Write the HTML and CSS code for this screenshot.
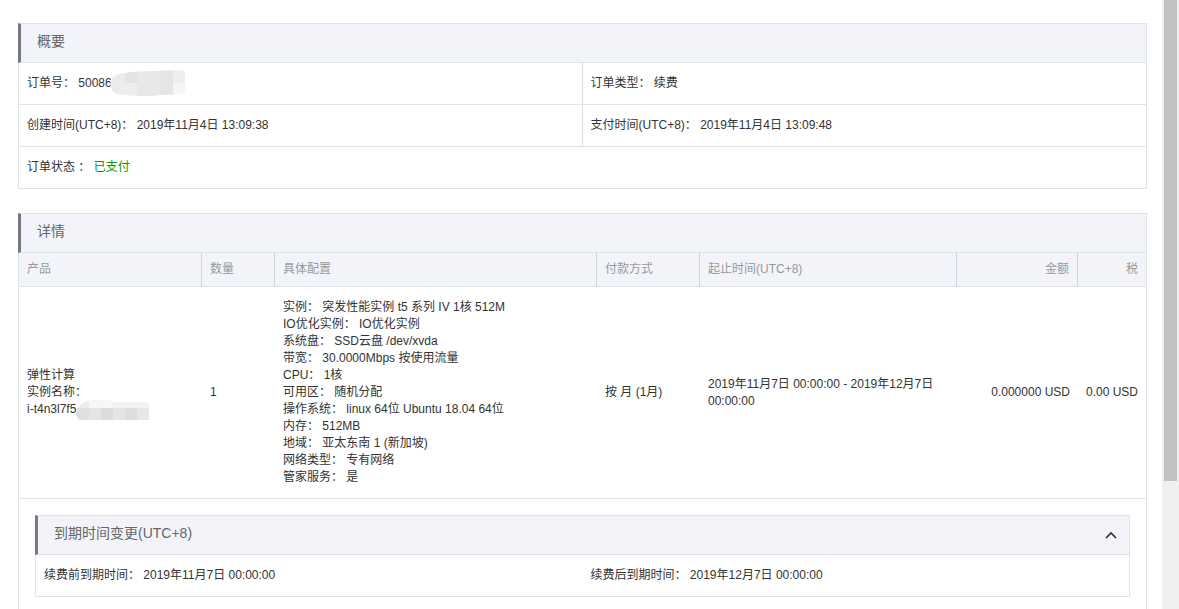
FILE: index.html
```html
<!DOCTYPE html>
<html lang="zh-CN">
<head>
<meta charset="utf-8">
<title>订单详情</title>
<link rel="stylesheet" href="styles.css">
</head>
<body>
<div class="viewport">
  <main class="page">
    <section class="panel">
      <h2 class="panel-title">概要</h2>
      <div class="facts">
        <p class="fact fact-divided">订单号： <span class="masked">50086<svg class="mask mask-order" width="75" height="28" viewBox="0 0 75 28" aria-hidden="true">
          <defs><clipPath id="order-shape"><path d="M0 14Q1 6 9 4Q24 1 48 1L70 0Q75 0 75 5V20Q74 24 68 24L50 25Q36 27 14 25Q3 25 1 18Z"/></clipPath></defs>
          <g clip-path="url(#order-shape)">
            <rect width="75" height="28" fill="#ebecec"/>
            <rect x="15" width="12" height="13" fill="#e4e3e3"/>
            <rect x="15" y="13" width="12" height="12" fill="#eeeeea"/>
            <rect x="27" width="24" height="28" fill="#e7e8e9"/>
            <rect x="51" width="12" height="28" fill="#e5e5e5"/>
            <rect x="63" width="12" height="13" fill="#eeeeef"/>
            <rect x="63" y="13" width="12" height="15" fill="#f3f4f4"/>
          </g>
        </svg></span></p>
        <p class="fact">订单类型： 续费</p>
        <p class="fact fact-divided">创建时间(UTC+8)： 2019年11月4日 13:09:38</p>
        <p class="fact">支付时间(UTC+8)： 2019年11月4日 13:09:48</p>
        <p class="fact fact-wide">订单状态 ： <span class="paid">已支付</span></p>
      </div>
    </section>

    <section class="panel">
      <h2 class="panel-title">详情</h2>
      <table class="items">
        <colgroup>
          <col class="col-product"><col class="col-count"><col><col class="col-payment"><col class="col-period"><col class="col-amount"><col class="col-tax">
        </colgroup>
        <thead>
          <tr><th>产品</th><th>数量</th><th>具体配置</th><th>付款方式</th><th>起止时间(UTC+8)</th><th class="num">金额</th><th class="num">税</th></tr>
        </thead>
        <tbody>
          <tr>
            <td>弹性计算<br>实例名称：<br><span class="masked">i-t4n3l7f5<svg class="mask mask-instance" width="73" height="20" viewBox="0 0 73 20" aria-hidden="true">
              <defs><clipPath id="instance-shape"><path d="M0 14Q1 3 13 1Q28-1 38 2H69Q73 2 73 6V20H3Z"/></clipPath></defs>
              <g clip-path="url(#instance-shape)">
                <rect width="73" height="20" fill="#e5e5e5"/>
                <rect width="13" height="8" fill="#ededed"/>
                <rect x="13" width="24" height="8" fill="#f7f7f7"/>
                <rect x="37" width="36" height="8" fill="#f1f2f1"/>
                <rect y="8" width="13" height="12" fill="#dfdfdf"/>
                <rect x="25" y="8" width="12" height="12" fill="#d8dddf"/>
                <rect x="49" y="8" width="12" height="12" fill="#dcdedb"/>
                <rect x="61" y="8" width="12" height="12" fill="#e8e8e8"/>
              </g>
            </svg></span></td>
            <td>1</td>
            <td>实例： 突发性能实例 t5 系列 IV 1核 512M<br>IO优化实例： IO优化实例<br>系统盘： SSD云盘 /dev/xvda<br>带宽： 30.0000Mbps 按使用流量<br>CPU： 1核<br>可用区： 随机分配<br>操作系统： linux 64位 Ubuntu 18.04 64位<br>内存： 512MB<br>地域： 亚太东南 1 (新加坡)<br>网络类型： 专有网络<br>管家服务： 是</td>
            <td>按 月 (1月)</td>
            <td>2019年11月7日 00:00:00 - 2019年12月7日 00:00:00</td>
            <td class="num">0.000000 USD</td>
            <td class="num">0.00 USD</td>
          </tr>
        </tbody>
      </table>
      <div class="nested">
        <section class="panel">
          <h3 class="panel-title">到期时间变更(UTC+8)
            <button class="toggle" type="button" aria-label="收起"><svg width="12" height="8" viewBox="0 0 12 8" aria-hidden="true"><path d="M1 7L6 2L11 7" fill="none" stroke="#333" stroke-width="1.7"/></svg></button>
          </h3>
          <div class="facts">
            <p class="fact">续费前到期时间： 2019年11月7日 00:00:00</p>
            <p class="fact">续费后到期时间： 2019年12月7日 00:00:00</p>
          </div>
        </section>
      </div>
    </section>
  </main>
  <div class="scroll-track"><div class="scroll-thumb"></div></div>
</div>
</body>
</html>
```

FILE: styles.css
```css
* {
  box-sizing: border-box;
}

body {
  margin: 0;
  background: #fff;
  color: #333;
  font: 12px/17px "Liberation Sans", "Noto Sans CJK SC", sans-serif;
}

.viewport {
  display: flex;
  height: 100vh;
  overflow: hidden;
}

.page {
  flex: 1;
  display: flex;
  flex-direction: column;
  gap: 24px;
  min-width: 0;
  padding: 23px 15px 0 18px;
}

.panel {
  flex: none;
  border: 1px solid #dfe4e9;
  border-top: 0;
}

.panel-title {
  display: flex;
  align-items: center;
  justify-content: space-between;
  height: 40px;
  margin: 0 0 0 -1px;
  padding: 0 12px 5px 16px;
  border: solid #dfe4e9;
  border-width: 1px 0;
  border-left: 3px solid #777788;
  background: #f3f4f9;
  color: #666;
  font-size: 14px;
  font-weight: 400;
  line-height: 20px;
}

.facts {
  display: grid;
  grid-template-columns: 1fr 1fr;
}

.fact {
  margin: 0;
  padding: 12px 8px;
  border-top: 1px solid #dfe4e9;
}

.fact:nth-child(-n+2) {
  border-top: 0;
}

.fact-divided {
  border-right: 1px solid #d9dee3;
}

.fact-wide {
  grid-column: 1 / -1;
}

.paid {
  color: #090;
}

.masked {
  position: relative;
}

.mask {
  position: absolute;
}

.mask-order {
  top: -6px;
  left: 32px;
}

.mask-instance {
  top: -2px;
  left: 49px;
}

.items {
  width: 100%;
  border-collapse: separate;
  border-spacing: 0;
  table-layout: fixed;
}

.col-product { width: 183px; }
.col-count { width: 73px; }
.col-payment { width: 103px; }
.col-period { width: 257px; }
.col-amount { width: 121px; }
.col-tax { width: 68px; }

.items th {
  padding: 8px;
  border-right: 1px solid #cdd6dc;
  border-bottom: 1px solid #dfe4e9;
  background: #f3f4f9;
  color: #999;
  font-weight: 400;
  text-align: left;
}

.items th:last-child {
  border-right: 0;
}

.items td {
  padding: 12px 8px;
  border-bottom: 1px solid #dfe4e9;
  vertical-align: middle;
}

.items .num {
  text-align: right;
  white-space: nowrap;
}

.nested {
  padding: 16px;
}

.toggle {
  display: flex;
  padding: 4px 0 0;
  border: 0;
  background: none;
  cursor: pointer;
}

.scroll-track {
  flex: none;
  width: 17px;
  padding: 0 2px;
  background: #f0f0f0;
}

.scroll-thumb {
  height: 79%;
  background: #c1c1c1;
}
```
